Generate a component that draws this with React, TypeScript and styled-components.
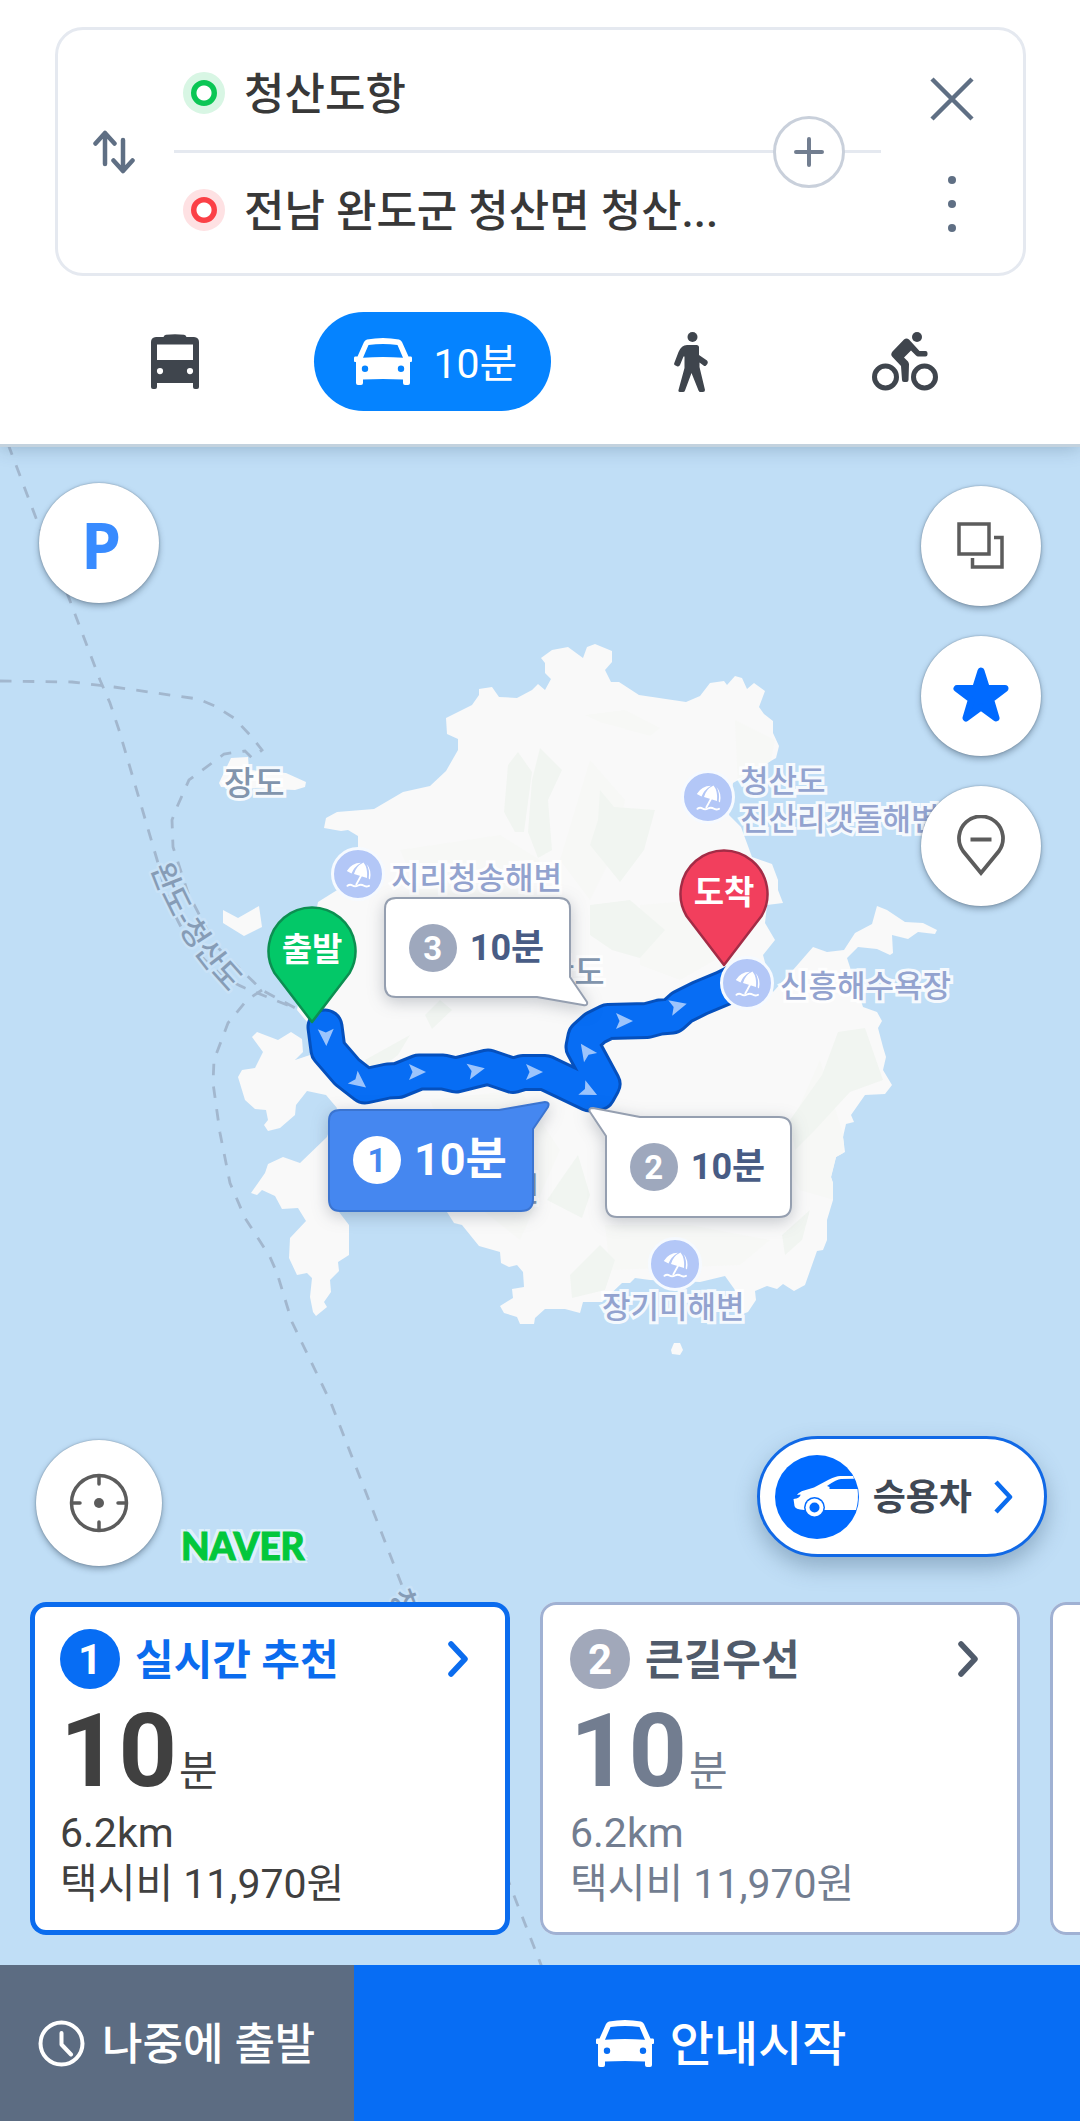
import React from 'react';
import styled, { createGlobalStyle, css } from 'styled-components';

const GlobalStyle = createGlobalStyle`
  * { box-sizing: border-box; }
  body {
    margin: 0;
    background: #ffffff;
    font-family: Roboto, "Noto Sans CJK KR", sans-serif;
    color: #383838;
  }
  button {
    appearance: none;
    margin: 0;
    padding: 0;
    border: 0;
    background: none;
    color: inherit;
    font: inherit;
    text-align: left;
    cursor: pointer;
  }
  svg { display: block; flex: none; }
`;

const Page = styled.div`
  display: flex;
  flex-direction: column;
  min-height: 100vh;
`;

/* Hangul sits high in the Roboto line box, so captions beside icons get a little top padding. */
const Caption = styled.span`
  padding-top: 4px;
`;

/* ---------- header ---------- */

const Header = styled.header`
  position: relative;
  z-index: 2;
  padding: 27px 54px 33px 55px;
  background: #ffffff;
  box-shadow: 0 3px 0 #c3d2de, 0 3px 18px rgba(40, 70, 100, 0.32);
`;

const SearchCard = styled.section`
  display: flex;
  align-items: stretch;
  border: 3px solid #e5e9f0;
  border-radius: 28px;
`;

const SwapButton = styled.button`
  flex: 0 0 116px;
  display: flex;
  align-items: center;
  justify-content: center;
  padding-right: 4px;
`;

const Waypoints = styled.div`
  position: relative;
  flex: 1;
  min-width: 0;
  padding: 6px 0;
`;

const Waypoint = styled.button`
  display: flex;
  align-items: center;
  gap: 19px;
  width: 100%;
  height: 114px;
  padding: 0 120px 0 9px;
  font-size: 44px;
  font-weight: 500;
  line-height: 60px;
  white-space: nowrap;
`;

const Dot = styled.span<{ $color: string; $halo: string }>`
  flex: none;
  width: 42px;
  height: 42px;
  border: 8px solid ${(p) => p.$halo};
  border-radius: 50%;
  background: radial-gradient(circle, #ffffff 7px, ${(p) => p.$color} 8px);
`;

const Divider = styled.div`
  height: 3px;
  background: #e5e9f0;
`;

const AddButton = styled.button`
  position: absolute;
  top: 50%;
  right: 36px;
  width: 72px;
  height: 72px;
  transform: translateY(-50%);
  display: flex;
  align-items: center;
  justify-content: center;
  border: 3px solid #c9d0db;
  border-radius: 50%;
  background: #ffffff;
`;

const SearchActions = styled.div`
  flex: 0 0 142px;
  display: flex;
  flex-direction: column;
  justify-content: center;
  align-items: center;
  gap: 39px;
`;

const PlainButton = styled.button`
  width: 66px;
  height: 66px;
  display: flex;
  align-items: center;
  justify-content: center;
`;

const Modes = styled.nav`
  display: flex;
  justify-content: space-between;
  margin-top: 36px;
  padding: 0 46px 0 45px;
`;

const ModeButton = styled.button<{ $active?: boolean }>`
  display: flex;
  align-items: center;
  justify-content: center;
  gap: 21px;
  width: 150px;
  height: 99px;
  border-radius: 50px;
  color: #3f454d;
  font-size: 41px;
  line-height: 60px;
  ${(p) =>
    p.$active &&
    css`
      width: 237px;
      padding-left: 6px;
      background: #0583ff;
      color: #ffffff;
    `}
`;

/* ---------- map ---------- */

const MapArea = styled.main`
  position: relative;
  flex: 1;
  display: flex;
  flex-direction: column;
  justify-content: space-between;
  min-height: 1521px;
  overflow: hidden;
  background: #c0def6;
`;

const MapCanvas = styled.div`
  position: absolute;
  top: 0;
  left: 50%;
  width: 1080px;
  height: 1521px;
  margin-left: -540px;
`;

const Terrain = styled.svg`
  position: absolute;
  inset: 0;
  width: 100%;
  height: 100%;
`;

const PlaceLabel = styled.div<{ $x: number; $y: number; $tone?: 'place' | 'beach' }>`
  position: absolute;
  left: ${(p) => p.$x}px;
  top: ${(p) => p.$y}px;
  transform: translateY(-50%);
  padding-top: 4px;
  color: ${(p) => (p.$tone === 'place' ? '#8295ad' : '#93a3cf')};
  font-size: ${(p) => (p.$tone === 'place' ? 33 : 31)}px;
  font-weight: 500;
  line-height: 38px;
  white-space: nowrap;
  -webkit-text-stroke: 6px rgba(255, 255, 255, 0.85);
  paint-order: stroke fill;
`;

const BeachMark = styled.span<{ $x: number; $y: number }>`
  position: absolute;
  left: ${(p) => p.$x}px;
  top: ${(p) => p.$y}px;
  width: 54px;
  height: 54px;
  transform: translate(-50%, -50%);
  border: 3px solid #f6faff;
  border-radius: 50%;
  background: #b3c7f7;
`;

const Pin = styled.div<{ $x: number; $y: number }>`
  position: absolute;
  left: ${(p) => p.$x}px;
  top: ${(p) => p.$y}px;
  width: 90px;
  height: 118px;
  transform: translate(-50%, -100%);
  padding-top: 22px;
  color: #ffffff;
  font-size: 33px;
  font-weight: 700;
  line-height: 44px;
  text-align: center;
  svg {
    position: absolute;
    inset: 0;
    overflow: visible;
  }
  span { position: relative; }
`;

const Bubble = styled.button<{ $x: number; $y: number; $w: number; $selected?: boolean }>`
  position: absolute;
  left: ${(p) => p.$x}px;
  top: ${(p) => p.$y}px;
  width: ${(p) => p.$w}px;
  height: 101px;
  display: flex;
  align-items: center;
  justify-content: center;
  gap: 13px;
  padding-right: 2px;
  color: ${(p) => (p.$selected ? '#ffffff' : '#485c85')};
  font-size: ${(p) => (p.$selected ? 45 : 36)}px;
  font-weight: 700;
  line-height: 60px;
  white-space: nowrap;
  > svg {
    position: absolute;
    inset: 0;
    overflow: visible;
    filter: drop-shadow(0 4px 8px rgba(40, 50, 70, 0.25));
  }
  > span { position: relative; }
`;

const BubbleNumber = styled.span<{ $selected?: boolean }>`
  width: 48px;
  height: 48px;
  border-radius: 50%;
  background: ${(p) => (p.$selected ? '#ffffff' : '#9ea8bd')};
  color: ${(p) => (p.$selected ? '#4587f0' : '#ffffff')};
  font-size: 33px;
  line-height: 50px;
  text-align: center;
`;

const TopControls = styled.div`
  position: relative;
  display: flex;
  align-items: flex-start;
  justify-content: space-between;
  padding: 39px 39px 0;
`;

const ControlStack = styled.div`
  display: flex;
  flex-direction: column;
  gap: 30px;
  padding-top: 3px;
`;

const RoundButton = styled.button<{ $size?: number }>`
  display: flex;
  align-items: center;
  justify-content: center;
  flex: none;
  width: ${(p) => p.$size ?? 120}px;
  height: ${(p) => p.$size ?? 120}px;
  border-radius: 50%;
  background: #ffffff;
  box-shadow: 0 0 2px rgba(60, 80, 100, 0.5), 0 3px 6px rgba(40, 60, 80, 0.4);
`;

const ParkingLetter = styled.span`
  padding: 4px 0 0 4px;
  color: #388bff;
  font-family: "Noto Sans", Roboto, sans-serif;
  font-size: 64px;
  font-weight: 700;
  line-height: 72px;
`;

const Lower = styled.div`
  position: relative;
`;

const LowerControls = styled.div`
  display: flex;
  align-items: flex-end;
  padding: 0 33px 36px 36px;
`;

const Logo = styled.span`
  flex: 1;
  padding-left: 19px;
  color: #03c73c;
  font-family: Lato, "Open Sans", sans-serif;
  font-size: 37px;
  font-weight: 900;
  line-height: 40px;
  -webkit-text-stroke: 1px #03c73c;
  text-shadow: 3px 3px 0 #def0fb, -3px -3px 0 #def0fb, 3px -3px 0 #def0fb, -3px 3px 0 #def0fb,
    3px 0 0 #def0fb, -3px 0 0 #def0fb;
`;

const VehicleButton = styled.button`
  display: flex;
  align-items: center;
  height: 121px;
  margin-bottom: 9px;
  padding: 0 31px 0 15px;
  border: 3px solid #1169e6;
  border-radius: 61px;
  background: #ffffff;
  box-shadow: 0 10px 22px rgba(50, 80, 110, 0.35);
  color: #3f4854;
  font-size: 36px;
  font-weight: 700;
  line-height: 60px;
`;

const VehicleName = styled.span`
  padding: 2px 22px 0 14px;
`;

const RouteCards = styled.div`
  display: flex;
  gap: 30px;
  padding: 0 0 30px 30px;
  overflow: hidden;
`;

const RouteCard = styled.button<{ $selected?: boolean }>`
  flex: 0 0 480px;
  display: flex;
  flex-direction: column;
  min-height: 333px;
  padding: 27px 30px 25px;
  border-radius: 16px;
  background: #ffffff;
  box-shadow: inset 0 0 0 ${(p) => (p.$selected ? '5px #0b6cee' : '3px #a0b1d3')};
  color: ${(p) => (p.$selected ? '#404040' : '#727d90')};
`;

const CardHeader = styled.span<{ $selected?: boolean }>`
  display: flex;
  align-items: center;
  width: 100%;
  height: 60px;
  padding-right: 12px;
  color: ${(p) => (p.$selected ? '#0b6cee' : '#505b6b')};
`;

const CardNumber = styled.span<{ $selected?: boolean }>`
  width: 60px;
  height: 60px;
  border-radius: 50%;
  background: ${(p) => (p.$selected ? '#076df4' : '#a1a8ba')};
  color: #ffffff;
  font-size: 42px;
  font-weight: 700;
  line-height: 62px;
  text-align: center;
`;

const CardTitle = styled.span`
  flex: 1;
  padding: 4px 0 0 15px;
  font-size: 42px;
  font-weight: 700;
  line-height: 56px;
`;

const Duration = styled.span`
  display: flex;
  align-items: baseline;
  gap: 2px;
  height: 80px;
  margin: 22px 0 17px;
  font-size: 42px;
  line-height: 42px;
  strong {
    font-size: 102px;
    font-weight: 700;
    line-height: 80px;
  }
`;

const Detail = styled.span`
  font-size: 41px;
  line-height: 51px;
`;

const BottomBar = styled.footer`
  display: flex;
  min-height: 156px;
`;

const LaterButton = styled.button`
  display: flex;
  align-items: center;
  gap: 17px;
  padding: 0 39px 0 38px;
  background: #5c6c82;
  color: #ffffff;
  font-size: 44px;
  font-weight: 500;
  line-height: 60px;
`;

const StartButton = styled.button`
  flex: 1;
  display: flex;
  align-items: center;
  justify-content: center;
  gap: 16px;
  padding-left: 8px;
  background: #076df4;
  color: #ffffff;
  font-size: 48px;
  font-weight: 500;
  line-height: 60px;
`;

/* ---------- icons ---------- */

const CarIcon = () => (
  <svg width="58" height="47" viewBox="0 0 58 47" aria-hidden="true">
    <path
      fill="currentColor"
      fillRule="evenodd"
      d="M13 1.500Q29-1.500 45 1.500Q47 2 48 4L54.500 18.500H57Q58 18.500 58 20V23Q58 24 57 24H56V45Q56 47 54 47H51Q49 47 49 45V41.500Q29 40.500 9 41.500V45Q9 47 7 47H4Q2 47 2 45V24H1Q0 24 0 23V20Q0 18.500 1 18.500H3.500L10 4Q11 2 13 1.500ZM14.500 7L9 19.800Q29 18.300 49 19.800L43.500 7Q29 5 14.500 7ZM11 27.500A3.200 3.200 0 1 0 11 33.900A3.200 3.200 0 1 0 11 27.500ZM47 27.500A3.200 3.200 0 1 0 47 33.900A3.200 3.200 0 1 0 47 27.500Z"
    />
  </svg>
);

const BusIcon = () => (
  <svg width="48" height="55" viewBox="0 0 48 55" aria-hidden="true">
    <path
      fill="currentColor"
      fillRule="evenodd"
      d="M15 .8Q24-.5 33 .8Q35 1.200 35.500 3H43Q48 3.500 48 8V53Q48 55 46 55H44Q42 55 42 53V49H6V53Q6 55 4 55H2Q0 55 0 53V8Q0 3.500 5 3H12.500Q13 1.200 15 .8ZM6 10.500V26H42V10.500ZM9 34A3.100 3.100 0 1 0 9 40.200A3.100 3.100 0 1 0 9 34ZM39 34A3.100 3.100 0 1 0 39 40.200A3.100 3.100 0 1 0 39 34Z"
    />
  </svg>
);

const WalkIcon = () => (
  <svg width="34" height="60" viewBox="0 0 34 60" aria-hidden="true">
    <g fill="currentColor">
      <circle cx="18.500" cy="5" r="5" />
      <path d="M13 13H22.500Q25 13 25 15.500V23L33 28.500Q35 31 32 33.500Q31 34.500 29.500 33.500L25.500 30.500V35L31 58Q31 60 29 60H26.500Q25 60 24.500 58.500L17.500 41L11 58.500Q10.500 60 9 60H6Q4 60 4.500 58L10.500 36V24.500H9.500L6 33Q5 35 3 34.200L1 33.300Q-.3 32.500.3 31L4.500 20Q7.500 13 13 13Z" />
    </g>
  </svg>
);

const BikeIcon = () => (
  <svg width="66" height="59" viewBox="0 0 66 59" aria-hidden="true">
    <g fill="none" stroke="currentColor" strokeWidth="5">
      <circle cx="13.500" cy="45" r="11" />
      <circle cx="52.500" cy="45" r="11" />
    </g>
    <circle cx="45" cy="5" r="5" fill="currentColor" />
    <path
      fill="currentColor"
      d="M32 7.500Q34.500 5.500 37 7.500L47.500 19H53.500Q55.500 19 55.500 21V22.500Q55.500 24.500 53.500 24.500H46Q45 24.500 44 23.500L39 18.500L32 25.500L36 29.500Q37 31 37 32.500L36.500 48Q36.500 50 34.500 50H32Q30 50 30 48L29 34L20.500 25Q18 22.500 20.500 19.500Z"
    />
  </svg>
);

const Chevron = () => (
  <svg width="20" height="36" viewBox="0 0 20 36" aria-hidden="true">
    <path d="M3 3L17 18L3 33" fill="none" stroke="currentColor" strokeWidth="5.500" strokeLinecap="round" strokeLinejoin="round" />
  </svg>
);

const BeachGlyph = () => (
  <svg width="48" height="48" viewBox="0 0 48 48" aria-hidden="true">
    <path d="M28 24L22 35" stroke="#ffffff" strokeWidth="1.800" fill="none" />
    <path d="M13.500 35.800Q16 33.800 18.500 35.500T24 35.500T29.500 35.500T35 35.800" stroke="#ffffff" strokeWidth="2" strokeLinecap="round" fill="none" />
    <path d="M29.500 12.500Q22 16 20 24L33 28Q34 18 29.500 12.500ZM27 12.800Q17.500 13 12.800 21L17.500 23.500Q20 17 27 12.800ZM32.500 14Q38 20 36 29.500L34.700 28.500Q36 20 32.500 14Z" fill="#ffffff" />
  </svg>
);

const VehicleIcon = () => (
  <svg width="84" height="84" viewBox="0 0 84 84" aria-hidden="true">
    <circle cx="42" cy="42" r="42" fill="#006aff" />
    <path fill="#ffffff" d="M18.500 44L21.500 43.500Q25.500 42 25.500 39.500L22 40Q24 37 29 35.500L39 32.500L54 24.500Q61 21 65 21H78L79 23.800L66 24Q62 24 52 31L54.500 32L54.500 34H82.500Q84 45 81 55H29Q20 54.500 19.500 51Z" />
    <circle cx="39.500" cy="52.500" r="10.500" fill="#006aff" />
    <circle cx="39.500" cy="52.500" r="9" fill="#ffffff" />
    <circle cx="39.500" cy="52.500" r="5" fill="#006aff" />
  </svg>
);

const PinShape = ({ fill, edge }: { fill: string; edge: string }) => (
  <svg width="90" height="118" viewBox="0 0 90 118" aria-hidden="true">
    <path d="M45 116L7.500 67A43.500 43.500 0 1 1 82.500 67Z" fill={fill} stroke={edge} strokeWidth="2.500" strokeLinejoin="round" />
  </svg>
);

/* ---------- map data ---------- */

const mainIsland =
  'M324 828L326 818L337 812L374 809L403 792L430 786L446 771L458 750V739L447 734L446 718L472 705L479 695V689L492 687L499 697L517 698L532 690L538 684L545 690L551 679L545 673V663L541 658L552 650L568 647L583 658L587 647L595 644L612 651V662L605 670L611 682H619L639 695L686 702L700 696L710 683L724 681L727 685L735 676L742 678L747 689L754 683L765 691L759 707L764 714L773 721V733L779 746L776 758L733 783L729 815L741 827L752 857L772 864L778 880V890L783 903L767 905L765 923L775 940L763 955L773 992L793 970L813 947L827 952L844 950L855 933L872 924L877 906L887 910L905 922L923 923L937 930L935 934L918 932L908 939L892 935L893 953L890 955L877 949L858 947L847 958L863 1007L877 1012L882 1021L878 1028L883 1047L886 1057L883 1070L892 1085L885 1094L865 1095L851 1115L854 1122L846 1124L843 1137L845 1152L836 1157L831 1177L833 1183V1200L827 1220V1240L823 1250L817 1251L805 1285L794 1291L783 1284L777 1289L767 1286L755 1291L756 1300L748 1312L740 1315L735 1290L725 1276L700 1282L650 1280L635 1278L630 1283H622L602 1302H583L580 1313L565 1309H545L535 1318L534 1324H520L517 1317L504 1313L500 1306L513 1298L512 1289L524 1287L523 1272L517 1265L509 1267L501 1263L500 1252L479 1246L462 1225L454 1223L447 1212L340 1206L339 1212L349 1225V1255L338 1262L339 1271L330 1280L331 1292L324 1302L327 1307L316 1316L313 1312L310 1297L312 1278L307 1273L297 1275L289 1258L290 1238L306 1221L298 1208L282 1209L275 1196L262 1190L257 1195L251 1193L265 1173L268 1164L283 1157L300 1163L327 1137L337 1108L326 1095L307 1091L296 1105L295 1115L280 1128L268 1131L264 1125L268 1120L266 1110L255 1109L245 1100L238 1077L242 1070L255 1068L263 1052L252 1037L257 1032L278 1040L291 1032L302 1039L303 1052L295 1060L310 1055L308 1023L297 1010L318 902L334 892L358 877V836L348 830L341 831Z';

const islets = [
  'M223 910L238 918L259 906L262 927L244 936L223 923Z',
  'M219 783L231 758L248 757L249 770L286 773L306 782L305 787L295 790L221 787Z',
  'M671 1350L674 1343L680 1343L683 1350L680 1355L672 1354Z',
];

const forest = [
  'M518 752L532 772L524 832H515L504 812L508 765Z',
  'M540 748L562 770L548 800L552 850L538 858L528 832L532 780Z',
  'M600 790L614 807L655 810L644 850L620 882L590 845L598 820Z',
  'M440 1000L452 1010L432 1029L425 1015Z',
  'M590 905L630 900L665 930L640 958L612 950L590 935Z',
  'M365 1060L410 1035L398 1055L372 1075Z',
  'M838 1032L865 1028L883 1080L850 1092L815 1130L795 1150L790 1120L822 1075Z',
  'M562 1178L578 1155L590 1195L582 1218L547 1200Z',
  'M570 1275L600 1245L615 1260L605 1290L572 1298Z',
  'M782 1235L810 1210L802 1240L785 1255Z',
];

const lightPatches = [
  'M585 715L625 710L660 728L650 736L600 722Z',
  'M590 760L625 800L615 850L590 900L560 860Z',
  'M735 720L775 740L770 765L738 790Z',
  'M430 1100L520 1090L560 1150L520 1240L470 1200Z',
  'M605 1225L690 1225L770 1240L740 1265L610 1270Z',
  'M820 1060L845 1140L835 1200L800 1190L780 1150Z',
  'M640 905L700 900L715 960L680 980L640 965Z',
  'M400 850L500 835L540 860L520 895L420 895Z',
];

const ferries = [
  'M8 444L36 518L67 593L100 680L110 703L119 730L158 863Q180 960 245 988L297 1009',
  'M0 681L72 682L114 687L198 699L215 706L234 718L250 735L262 750L252 758L245 751L224 754L189 780L177 807L172 820L173 847L188 893L215 945L262 990L297 1009',
  'M262 990L247 1000L228 1023L214 1060L213 1083L220 1133L230 1183L245 1218L270 1257L277 1273L292 1322L302 1343L331 1403L372 1508L401 1583L511 1888L545 1975',
];

const routePath =
  'M325 1027L328 1050L347 1072L365 1086L388 1081L398 1080.500L419 1072H443L456 1075L488 1067L513 1075.500L523 1072.500H545L590 1094L598 1093L603 1084L583 1047L585 1037L595 1028L608 1021.500L647 1020.500L660 1017L672 1016L682 1007L700 998L724 988L744 978';

const arrows: Array<[number, number, number]> = [
  [326, 1037, 88],
  [359, 1082, 38],
  [417, 1072, 0],
  [476, 1070, -12],
  [534, 1072, 0],
  [589, 1091, 26],
  [586, 1051, -125],
  [624, 1021, 0],
  [678, 1006, -14],
];

const beaches: Array<[number, number]> = [
  [358, 430],
  [708, 353],
  [747, 539],
  [675, 820],
];

const bubbles = [
  {
    n: 3,
    x: 384,
    y: 453,
    w: 187,
    shape: 'M12 1H175Q186 1 186 12V80L203 105Q204 109 199 108L153 100H12Q1 100 1 89V12Q1 1 12 1Z',
  },
  {
    n: 1,
    x: 328,
    y: 665,
    w: 206,
    selected: true,
    shape: 'M12 1H171L217-7Q222-7 220-2L205 20V90Q205 102 193 102H12Q1 102 1 90V12Q1 1 12 1Z',
  },
  {
    n: 2,
    x: 605,
    y: 672,
    w: 187,
    shape: 'M35 1H174Q186 1 186 12V89Q186 101 174 101H12Q1 101 1 89V20L-15-4Q-17-8-12-8Z',
  },
];

const routes = [
  { n: 1, title: '실시간 추천', minutes: 10, km: '6.2km', taxi: '택시비 11,970원', selected: true },
  { n: 2, title: '큰길우선', minutes: 10, km: '6.2km', taxi: '택시비 11,970원' },
];

/* ---------- screen ---------- */

export default function App() {
  return (
    <Page>
      <GlobalStyle />
      <Header>
        <SearchCard>
          <SwapButton aria-label="출발지와 도착지 바꾸기">
            <svg width="42" height="44" viewBox="0 0 42 44" aria-hidden="true">
              <path
                d="M12 34V3M2.500 13.500L12 3L21.500 13.500M30 10V41M20.500 30.500L30 41L39.500 30.500"
                fill="none"
                stroke="#5f6f84"
                strokeWidth="4.500"
                strokeLinecap="round"
                strokeLinejoin="round"
              />
            </svg>
          </SwapButton>
          <Waypoints>
            <Waypoint>
              <Dot $color="#0bc655" $halo="#d8f6e4" />
              <Caption>청산도항</Caption>
            </Waypoint>
            <Divider />
            <Waypoint>
              <Dot $color="#fb4046" $halo="#fee1e3" />
              <Caption>전남 완도군 청산면 청산...</Caption>
            </Waypoint>
            <AddButton aria-label="경유지 추가">
              <svg width="30" height="30" viewBox="0 0 30 30" aria-hidden="true">
                <path d="M15 2V28M2 15H28" stroke="#727e90" strokeWidth="4" strokeLinecap="round" />
              </svg>
            </AddButton>
          </Waypoints>
          <SearchActions>
            <PlainButton aria-label="닫기">
              <svg width="44" height="44" viewBox="0 0 44 44" aria-hidden="true">
                <path d="M2 2L42 42M42 2L2 42" stroke="#5f6f84" strokeWidth="4.500" />
              </svg>
            </PlainButton>
            <PlainButton aria-label="더보기">
              <svg width="8" height="56" viewBox="0 0 8 56" aria-hidden="true">
                <g fill="#5f6f84">
                  <circle cx="4" cy="4" r="4" />
                  <circle cx="4" cy="28" r="4" />
                  <circle cx="4" cy="52" r="4" />
                </g>
              </svg>
            </PlainButton>
          </SearchActions>
        </SearchCard>
        <Modes>
          <ModeButton aria-label="대중교통">
            <BusIcon />
          </ModeButton>
          <ModeButton $active aria-pressed="true">
            <CarIcon />
            <Caption>10분</Caption>
          </ModeButton>
          <ModeButton aria-label="도보">
            <WalkIcon />
          </ModeButton>
          <ModeButton aria-label="자전거">
            <BikeIcon />
          </ModeButton>
        </Modes>
      </Header>

      <MapArea>
        <MapCanvas>
          <Terrain viewBox="0 444 1080 1521" aria-hidden="true">
            <clipPath id="land">
              <path d={mainIsland} />
            </clipPath>
            <path d={mainIsland} fill="#f9f9f9" />
            {islets.map((d) => (
              <path key={d} d={d} fill="#f9f9f9" />
            ))}
            <g clipPath="url(#land)">
              {lightPatches.map((d) => (
                <path key={d} d={d} fill="#f7f8f6" />
              ))}
              {forest.map((d) => (
                <path key={d} d={d} fill="#f1f5f1" />
              ))}
            </g>
            <g fill="none" stroke="#a2b7ce" strokeWidth="2.800" strokeDasharray="11.500 11.300">
              {ferries.map((d) => (
                <path key={d} d={d} />
              ))}
            </g>
            <path id="ferry-name" d="M149 862C163 904 186 952 244 1008" fill="none" />
            <g
              fill="#869cb6"
              stroke="#c9e2f7"
              strokeWidth="5"
              strokeLinejoin="round"
              fontFamily='"Noto Sans CJK KR", sans-serif'
              fontSize="30"
              fontWeight="500"
              style={{ paintOrder: 'stroke' }}
            >
              <text>
                <textPath href="#ferry-name" startOffset="6">
                  완도-청산도
                </textPath>
              </text>
              <text transform="translate(389 1594) rotate(69)">청</text>
            </g>
          </Terrain>

          <PlaceLabel $x={224} $y={338} $tone="place">장도</PlaceLabel>
          <PlaceLabel $x={544} $y={527} $tone="place">산도</PlaceLabel>
          <PlaceLabel $x={509} $y={744} $tone="place">면</PlaceLabel>
          <PlaceLabel $x={391} $y={433}>지리청송해변</PlaceLabel>
          <PlaceLabel $x={740} $y={355}>
            청산도
            <br />
            진산리갯돌해변
          </PlaceLabel>
          <PlaceLabel $x={602} $y={862}>장기미해변</PlaceLabel>

          <Terrain viewBox="0 444 1080 1521" aria-hidden="true">
            <g fill="none" strokeLinecap="round" strokeLinejoin="round">
              <path d={routePath} stroke="#0550bd" strokeWidth="37" />
              <path d={routePath} stroke="#076df4" strokeWidth="31" />
            </g>
            {arrows.map(([x, y, r]) => (
              <path key={`${x}-${y}`} d="M9 0L-8-8L-4.500 0L-8 8Z" fill="#9cc4fc" transform={`translate(${x} ${y}) rotate(${r})`} />
            ))}
          </Terrain>

          {beaches.map(([x, y]) => (
            <BeachMark key={`${x}-${y}`} $x={x} $y={y}>
              <BeachGlyph />
            </BeachMark>
          ))}
          <PlaceLabel $x={780} $y={541}>신흥해수욕장</PlaceLabel>

          <Pin $x={312} $y={580}>
            <PinShape fill="#03c868" edge="#0c8f51" />
            <span>출발</span>
          </Pin>
          <Pin $x={724} $y={523}>
            <PinShape fill="#f23f5d" edge="#a32c46" />
            <span>도착</span>
          </Pin>

          {bubbles.map((b) => (
            <Bubble key={b.n} $x={b.x} $y={b.y} $w={b.w} $selected={b.selected}>
              <svg width={b.w} height="101" viewBox={`0 0 ${b.w} 101`} aria-hidden="true">
                <path
                  d={b.shape}
                  fill={b.selected ? '#4587f0' : '#ffffff'}
                  stroke={b.selected ? '#3b74d0' : '#959fb0'}
                  strokeWidth="2"
                  strokeLinejoin="round"
                />
              </svg>
              <BubbleNumber $selected={b.selected}>{b.n}</BubbleNumber>
              <span>10분</span>
            </Bubble>
          ))}
        </MapCanvas>

        <TopControls>
          <RoundButton aria-label="주차장">
            <ParkingLetter>P</ParkingLetter>
          </RoundButton>
          <ControlStack>
            <RoundButton aria-label="지도 유형">
              <svg width="48" height="48" viewBox="0 0 48 48" aria-hidden="true">
                <path d="M2 2H32V32H2ZM37 15.500H45V45H15.500V36" fill="none" stroke="#5c5c5c" strokeWidth="3.500" />
              </svg>
            </RoundButton>
            <RoundButton aria-label="즐겨찾기">
              <svg width="58" height="58" viewBox="0 0 58 58" aria-hidden="true">
                <path
                  d="M29 4L34.500 21.500H53L38.500 32.500L44 51L29 40L14 51L19.500 32.500L5 21.500H23.500Z"
                  fill="#006aff"
                  stroke="#006aff"
                  strokeWidth="7"
                  strokeLinejoin="round"
                />
              </svg>
            </RoundButton>
            <RoundButton aria-label="장소 숨기기">
              <svg width="50" height="62" viewBox="0 0 50 62" aria-hidden="true">
                <path d="M25 58L7 36A22 22 0 1 1 43 36ZM14.500 24.500H35.500" fill="none" stroke="#5c5c5c" strokeWidth="3.800" />
              </svg>
            </RoundButton>
          </ControlStack>
        </TopControls>

        <Lower>
          <LowerControls>
            <RoundButton $size={126} aria-label="현재 위치">
              <svg width="60" height="60" viewBox="0 0 60 60" aria-hidden="true">
                <g fill="none" stroke="#5c5c5c" strokeWidth="3.500" strokeLinecap="round">
                  <circle cx="30" cy="30" r="27.500" />
                  <path d="M30 3V11M30 49V57M3 30H11M49 30H57" />
                </g>
                <circle cx="30" cy="30" r="5" fill="#5c5c5c" />
              </svg>
            </RoundButton>
            <Logo>NAVER</Logo>
            <VehicleButton>
              <VehicleIcon />
              <VehicleName>승용차</VehicleName>
              <svg width="19" height="34" viewBox="0 0 19 34" aria-hidden="true">
                <path d="M2 2L16 17L2 32" fill="none" stroke="#0b6cee" strokeWidth="4.500" strokeLinejoin="round" />
              </svg>
            </VehicleButton>
          </LowerControls>
          <RouteCards>
            {routes.map((r) => (
              <RouteCard key={r.n} $selected={r.selected}>
                <CardHeader $selected={r.selected}>
                  <CardNumber $selected={r.selected}>{r.n}</CardNumber>
                  <CardTitle>{r.title}</CardTitle>
                  <Chevron />
                </CardHeader>
                <Duration>
                  <strong>{r.minutes}</strong>분
                </Duration>
                <Detail>{r.km}</Detail>
                <Detail>{r.taxi}</Detail>
              </RouteCard>
            ))}
            <RouteCard aria-label="세 번째 경로" />
          </RouteCards>
        </Lower>
      </MapArea>

      <BottomBar>
        <LaterButton>
          <svg width="47" height="47" viewBox="0 0 47 47" aria-hidden="true">
            <g fill="none" stroke="#ffffff" strokeWidth="4" strokeLinecap="round" strokeLinejoin="round">
              <circle cx="23.500" cy="23.500" r="21" />
              <path d="M23.500 13V24.500L33 34.500" />
            </g>
          </svg>
          <Caption>나중에 출발</Caption>
        </LaterButton>
        <StartButton>
          <CarIcon />
          <Caption>안내시작</Caption>
        </StartButton>
      </BottomBar>
    </Page>
  );
}
